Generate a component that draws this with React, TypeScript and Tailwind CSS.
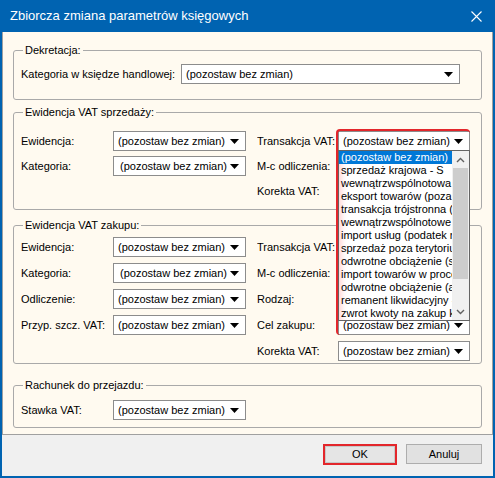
import type { ReactNode } from 'react';

const FONT = { fontFamily: '"Liberation Sans", Arial, sans-serif' };

const dropdownItems = [
  '(pozostaw bez zmian)',
  'sprzedaż krajowa - S',
  'wewnątrzwspólnotowa dostawa towarów',
  'eksport towarów (poza UE)',
  'transakcja trójstronna (dostawa)',
  'wewnątrzwspólnotowe nabycie towarów',
  'import usług (podatek należny)',
  'sprzedaż poza terytorium kraju',
  'odwrotne obciążenie (sprzedaż)',
  'import towarów w procedurze uproszczonej',
  'odwrotne obciążenie (art. 17)',
  'remanent likwidacyjny - zakończenie działalności',
  'zwrot kwoty na zakup kas rejestrujących',
];

function Arrow() {
  return (
    <svg width="9" height="5" viewBox="0 0 9 5" className="ml-auto shrink-0">
      <path d="M0 0h9L4.5 5z" fill="#000" />
    </svg>
  );
}

type ComboProps = {
  className: string;
  children?: ReactNode;
  shifted?: boolean;
  covered?: boolean;
};

// covered = sits under the open list, so only the empty box is drawn
function Combo({ className, children, shifted, covered }: ComboProps) {
  return (
    <div
      className={`relative flex h-[20px] shrink-0 items-center border border-[#8c8c8c] bg-white pr-[6px] text-[11px] leading-[13px] text-black ${
        shifted ? 'pl-[6px]' : 'pl-[4px]'
      } ${className}`}
    >
      {!covered && <span className="whitespace-nowrap">(pozostaw bez zmian)</span>}
      {!covered && <Arrow />}
      {children}
    </div>
  );
}

function Group({ title, className, children }: { title: string; className: string; children: ReactNode }) {
  return (
    <fieldset className={`mx-[10px] rounded-[3px] border border-[#a9a9a9] ${className}`}>
      <legend className="ml-[9px] px-[2px] text-[11px] leading-[13px] text-black">{title}</legend>
      {children}
    </fieldset>
  );
}

function Label({ children, className }: { children?: ReactNode; className: string }) {
  return (
    <span className={`shrink-0 whitespace-nowrap text-[11px] leading-[13px] text-black ${className}`}>{children}</span>
  );
}

function Row({
  left,
  right,
  leftCombo = true,
  shifted,
  covered,
  children,
}: {
  left?: string;
  right: string;
  leftCombo?: boolean;
  shifted?: boolean;
  covered?: boolean;
  children?: ReactNode;
}) {
  return (
    <div className="flex h-[20px] items-center">
      <Label className="w-[92px]">{left}</Label>
      {leftCombo ? <Combo className="w-[133px]" shifted={shifted} /> : <div className="w-[133px] shrink-0" />}
      <Label className="ml-[11px] w-[81px] overflow-hidden">{right}</Label>
      <Combo className="w-[132px]" covered={covered}>
        {children}
      </Combo>
    </div>
  );
}

function DropdownList() {
  return (
    <div className="absolute left-[-1px] top-[18px] z-20 flex h-[171px] w-[132px] border border-[#646464] bg-white shadow-[inset_6px_0_6px_-4px_rgba(255,60,60,0.25)]">
      <div className="flex min-w-0 flex-1 flex-col overflow-hidden">
        {dropdownItems.map((item, i) => (
          <div
            key={item}
            className={`h-[13px] whitespace-nowrap pl-[2px] text-[11px] leading-[13px] ${
              i === 0 ? 'bg-[#0078d7] text-white' : 'text-black'
            }`}
          >
            {item}
          </div>
        ))}
      </div>
      <div className="flex w-[17px] shrink-0 flex-col bg-[#f0f0f0]">
        <div className="flex h-[17px] items-center justify-center">
          <svg width="9" height="6" viewBox="0 0 9 6">
            <path d="M1 5L4.5 1.5L8 5" stroke="#606060" strokeWidth="1.4" fill="none" />
          </svg>
        </div>
        <div className="mx-[1px] h-[111px] bg-[#cdcdcd]" />
        <div className="flex-1" />
        <div className="flex h-[17px] items-center justify-center">
          <svg width="9" height="6" viewBox="0 0 9 6">
            <path d="M1 1L4.5 4.5L8 1" stroke="#606060" strokeWidth="1.4" fill="none" />
          </svg>
        </div>
      </div>
    </div>
  );
}

export default function App() {
  return (
    <div className="flex h-[478px] w-[495px] flex-col bg-[#0063b1] px-[2px] pb-[2px]" style={FONT}>
      <div className="flex h-[32px] shrink-0 items-center pl-[8px] pr-[10px] text-white">
        <span className="text-[13px] leading-[16px]">Zbiorcza zmiana parametrów księgowych</span>
        <svg width="11" height="11" viewBox="0 0 11 11" className="ml-auto mr-[1px]">
          <path d="M0.5 0.5L10.5 10.5M10.5 0.5L0.5 10.5" stroke="#fff" strokeWidth="1.1" />
        </svg>
      </div>

      <div className="flex h-[403px] shrink-0 flex-col border-x border-b border-[#a0a0a0] bg-[#fffaf0]">
        <Group title="Dekretacja:" className="mt-[12px] pb-[15px] pt-[7px]">
          <div className="flex h-[20px] items-center pl-[7px]">
            <Label className="w-[160px]">Kategoria w księdze handlowej:</Label>
            <Combo className="w-[279px]" />
          </div>
        </Group>

        <Group title="Ewidencja VAT sprzedaży:" className="relative z-10 mt-[6px] pb-[8px] pt-[12px]">
          <div className="flex flex-col gap-[5px] pl-[7px]">
            <Row left="Ewidencja:" right="Transakcja VAT:">
              <div className="pointer-events-none absolute left-[-3px] top-[-3px] z-30 h-[206px] w-[134px] rounded-[4px] border-l-2 border-t-2 border-[#e3262b]" />
              <DropdownList />
            </Row>
            <Row left="Kategoria:" right="M-c odliczenia:" shifted covered />
            <Row right="Korekta VAT:" leftCombo={false} covered />
          </div>
        </Group>

        <Group title="Ewidencja VAT zakupu:" className="mt-[9px] pb-[2px] pt-[5px]">
          <div className="flex flex-col gap-[6px] pl-[7px]">
            <Row left="Ewidencja:" right="Transakcja VAT:" covered />
            <Row left="Kategoria:" right="M-c odliczenia:" shifted covered />
            <Row left="Odliczenie:" right="Rodzaj:" covered />
            <Row left="Przyp. szcz. VAT:" right="Cel zakupu:" />
            <Row right="Korekta VAT:" leftCombo={false} />
          </div>
        </Group>

        <Group title="Rachunek do przejazdu:" className="mt-[15px] pb-[7px] pt-[8px]">
          <div className="flex h-[20px] items-center pl-[7px]">
            <Label className="w-[92px]">Stawka VAT:</Label>
            <Combo className="w-[133px]" />
          </div>
        </Group>
      </div>

      <div className="flex flex-1 items-start justify-end gap-[9px] bg-[#f0f0f0] pr-[11px] pt-[9px]">
        <button
          type="button"
          className="flex h-[21px] w-[74px] items-center justify-center border-2 border-[#e3262b] bg-[#e5e5e5] text-[11px] leading-[13px] text-black shadow-[inset_0_0_0_1px_#c8c8c8]"
        >
          OK
        </button>
        <button
          type="button"
          className="flex h-[20px] w-[76px] items-center justify-center border border-[#adadad] bg-[#e1e1e1] text-[11px] leading-[13px] text-black"
        >
          Anuluj
        </button>
      </div>
    </div>
  );
}
